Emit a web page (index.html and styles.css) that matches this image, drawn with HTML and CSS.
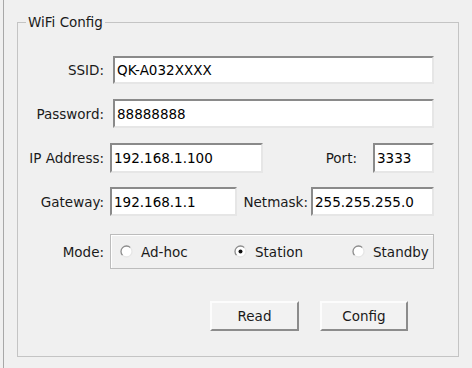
FILE: index.html
```html
<!DOCTYPE html>
<html lang="en">

<head>
    <meta charset="UTF-8">
    <title>WiFi Config</title>
    <link rel="stylesheet" href="styles.css">
</head>

<body>
    <div class="window">
        <fieldset class="group">
            <legend>WiFi Config</legend>

            <div class="row row-ssid">
                <label class="label" for="ssid">SSID:</label>
                <input class="field field-wide" type="text" id="ssid" value="QK-A032XXXX">
            </div>

            <div class="row row-pass">
                <label class="label" for="pass">Password:</label>
                <input class="field field-wide" type="text" id="pass" value="88888888">
            </div>

            <div class="row row-ip">
                <label class="label" for="ip">IP Address:</label>
                <input class="field field-ip" type="text" id="ip" value="192.168.1.100">
                <label class="label-port" for="port">Port:</label>
                <input class="field field-port" type="text" id="port" value="3333">
            </div>

            <div class="row row-gw">
                <label class="label" for="gw">Gateway:</label>
                <input class="field field-gw" type="text" id="gw" value="192.168.1.1">
                <label class="label-mask" for="mask">Netmask:</label>
                <input class="field field-mask" type="text" id="mask" value="255.255.255.0">
            </div>

            <div class="row row-mode">
                <span class="label">Mode:</span>
                <div class="mode-box">
                    <label class="radio radio-1">
                        <svg class="radio-icon" width="13" height="13" viewBox="0 0 13 13">
                            <circle cx="6.5" cy="6.5" r="5.5" fill="#fff"/>
                            <path d="M10.4 2.6 A5.5 5.5 0 0 0 2.6 10.4" fill="none" stroke="#8c8c8c" stroke-width="1.3"/>
                            <path d="M2.6 10.4 A5.5 5.5 0 0 0 10.4 2.6" fill="none" stroke="#e6e6e6" stroke-width="1.3"/>
                        </svg>
                        Ad-hoc
                    </label>
                    <label class="radio radio-2">
                        <svg class="radio-icon" width="13" height="13" viewBox="0 0 13 13">
                            <circle cx="6.5" cy="6.5" r="5.5" fill="#fff"/>
                            <path d="M10.4 2.6 A5.5 5.5 0 0 0 2.6 10.4" fill="none" stroke="#8c8c8c" stroke-width="1.3"/>
                            <path d="M2.6 10.4 A5.5 5.5 0 0 0 10.4 2.6" fill="none" stroke="#e6e6e6" stroke-width="1.3"/>
                            <circle cx="6.5" cy="6.5" r="2" fill="#111"/>
                        </svg>
                        Station
                    </label>
                    <label class="radio">
                        <svg class="radio-icon" width="13" height="13" viewBox="0 0 13 13">
                            <circle cx="6.5" cy="6.5" r="5.5" fill="#fff"/>
                            <path d="M10.4 2.6 A5.5 5.5 0 0 0 2.6 10.4" fill="none" stroke="#8c8c8c" stroke-width="1.3"/>
                            <path d="M2.6 10.4 A5.5 5.5 0 0 0 10.4 2.6" fill="none" stroke="#e6e6e6" stroke-width="1.3"/>
                        </svg>
                        Standby
                    </label>
                </div>
            </div>

            <div class="row row-buttons">
                <button type="button" class="btn btn-read">Read</button>
                <button type="button" class="btn btn-config">Config</button>
            </div>
        </fieldset>
    </div>
</body>

</html>
```

FILE: styles.css
```css
/* Classic dialog look */
body {
    margin: 0;
    background-color: #f0f0f0;
    font-family: 'DejaVu Sans', 'Liberation Sans', sans-serif;
    font-size: 13.5px;
    color: #1a1a1a;
}

.window {
    height: 368px;
    box-sizing: border-box;
    margin-left: 3px;
    border-left: 1px solid #a8a8a8;
    padding: 13px 13px 0 13px;
}

/* Group box */
.group {
    margin: 0;
    height: 344px;
    box-sizing: border-box;
    border: 1px solid #c4c4c4;
    padding: 25px 0 0 0;
}

.group legend {
    margin-left: 8px;
    padding: 0 2px;
    line-height: 18px;
}

.row {
    display: flex;
    align-items: center;
}

.label {
    width: 86px;
    text-align: right;
    margin-right: 6px;
}

.field {
    box-sizing: border-box;
    border: 2px solid;
    border-color: #8a8a8a #e6e6e6 #e6e6e6 #8a8a8a;
    background-color: #fff;
    font-family: inherit;
    font-size: 13.5px;
    color: #000;
    padding: 0 2px;
    margin: 0;
    outline: none;
}

.row-ssid {
    height: 28px;
}

.row-pass {
    height: 29px;
    margin-top: 15px;
}

.field-wide {
    width: 321px;
    height: 100%;
    margin-left: 3px;
}

.row-ip {
    height: 30px;
    margin-top: 15px;
}

.field-ip {
    width: 153px;
    height: 100%;
}

.label-port {
    width: 94px;
    text-align: right;
    margin-right: 16px;
}

.field-port {
    width: 61px;
    height: 100%;
}

.row-gw {
    height: 29px;
    margin-top: 14px;
}

.field-gw {
    width: 127px;
    height: 100%;
}

.label-mask {
    width: 71px;
    text-align: right;
    margin-right: 3px;
}

.field-mask {
    width: 123px;
    height: 100%;
}

/* Mode radios */
.row-mode {
    height: 35px;
    margin-top: 18px;
}

.mode-box {
    box-sizing: border-box;
    width: 324px;
    height: 100%;
    border: 1px solid #bcbcbc;
    box-shadow: inset 1px 1px 0 #fff;
    display: flex;
    align-items: center;
    padding-left: 9px;
}

.radio {
    display: flex;
    align-items: center;
    gap: 8px;
}

.radio-1 {
    width: 114px;
}

.radio-2 {
    width: 118px;
}

/* Buttons */
.row-buttons {
    height: 30px;
    margin-top: 32px;
    padding-left: 192px;
}

.btn {
    box-sizing: border-box;
    height: 100%;
    border: 2px solid;
    border-color: #fcfcfc #8c8c8c #8c8c8c #fcfcfc;
    background-color: #f2f2f2;
    font-family: inherit;
    font-size: 13.5px;
    color: #1a1a1a;
    padding: 0;
    cursor: pointer;
}

.btn-read {
    width: 89px;
}

.btn-config {
    width: 88px;
    margin-left: 21px;
}
```
